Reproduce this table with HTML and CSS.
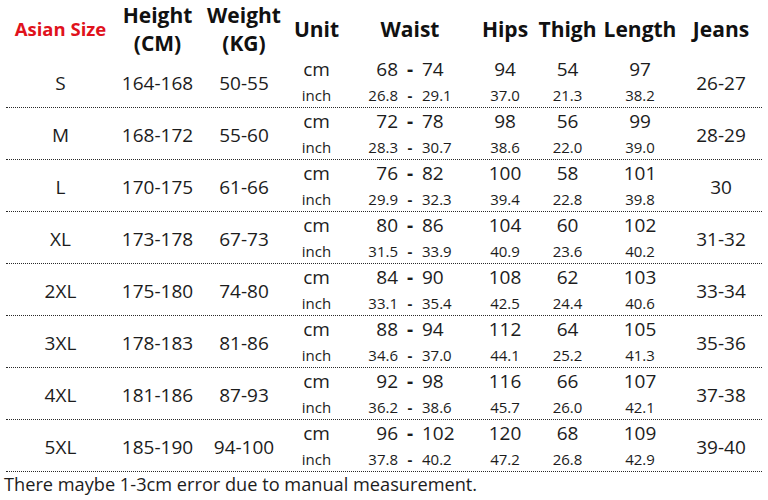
FILE: index.html
```html
<!DOCTYPE html>
<html>
<head>
<meta charset="utf-8">
<link rel="stylesheet" href="styles.css">
</head>
<body>
<div class="chart">
  <div class="row head">
    <div class="c red">Asian Size</div>
    <div class="c">Height<br>(CM)</div>
    <div class="c">Weight<br>(KG)</div>
    <div class="c">Unit</div>
    <div class="c">Waist</div>
    <div class="c">Hips</div>
    <div class="c">Thigh</div>
    <div class="c">Length</div>
    <div class="c">Jeans</div>
  </div>

  <div class="row">
    <div class="c big">S</div><div class="c big">164-168</div><div class="c big">50-55</div>
    <div class="c dual"><span class="u">cm</span><span class="s">inch</span></div>
    <div class="c dual"><span class="rng u"><i>68</i><b>-</b><em>74</em></span><span class="rng s"><i>26.8</i><b>-</b><em>29.1</em></span></div>
    <div class="c dual"><span class="u">94</span><span class="s">37.0</span></div>
    <div class="c dual"><span class="u">54</span><span class="s">21.3</span></div>
    <div class="c dual"><span class="u">97</span><span class="s">38.2</span></div>
    <div class="c big">26-27</div>
  </div>

  <div class="row">
    <div class="c big">M</div><div class="c big">168-172</div><div class="c big">55-60</div>
    <div class="c dual"><span class="u">cm</span><span class="s">inch</span></div>
    <div class="c dual"><span class="rng u"><i>72</i><b>-</b><em>78</em></span><span class="rng s"><i>28.3</i><b>-</b><em>30.7</em></span></div>
    <div class="c dual"><span class="u">98</span><span class="s">38.6</span></div>
    <div class="c dual"><span class="u">56</span><span class="s">22.0</span></div>
    <div class="c dual"><span class="u">99</span><span class="s">39.0</span></div>
    <div class="c big">28-29</div>
  </div>

  <div class="row">
    <div class="c big">L</div><div class="c big">170-175</div><div class="c big">61-66</div>
    <div class="c dual"><span class="u">cm</span><span class="s">inch</span></div>
    <div class="c dual"><span class="rng u"><i>76</i><b>-</b><em>82</em></span><span class="rng s"><i>29.9</i><b>-</b><em>32.3</em></span></div>
    <div class="c dual"><span class="u">100</span><span class="s">39.4</span></div>
    <div class="c dual"><span class="u">58</span><span class="s">22.8</span></div>
    <div class="c dual"><span class="u">101</span><span class="s">39.8</span></div>
    <div class="c big">30</div>
  </div>

  <div class="row">
    <div class="c big">XL</div><div class="c big">173-178</div><div class="c big">67-73</div>
    <div class="c dual"><span class="u">cm</span><span class="s">inch</span></div>
    <div class="c dual"><span class="rng u"><i>80</i><b>-</b><em>86</em></span><span class="rng s"><i>31.5</i><b>-</b><em>33.9</em></span></div>
    <div class="c dual"><span class="u">104</span><span class="s">40.9</span></div>
    <div class="c dual"><span class="u">60</span><span class="s">23.6</span></div>
    <div class="c dual"><span class="u">102</span><span class="s">40.2</span></div>
    <div class="c big">31-32</div>
  </div>

  <div class="row">
    <div class="c big">2XL</div><div class="c big">175-180</div><div class="c big">74-80</div>
    <div class="c dual"><span class="u">cm</span><span class="s">inch</span></div>
    <div class="c dual"><span class="rng u"><i>84</i><b>-</b><em>90</em></span><span class="rng s"><i>33.1</i><b>-</b><em>35.4</em></span></div>
    <div class="c dual"><span class="u">108</span><span class="s">42.5</span></div>
    <div class="c dual"><span class="u">62</span><span class="s">24.4</span></div>
    <div class="c dual"><span class="u">103</span><span class="s">40.6</span></div>
    <div class="c big">33-34</div>
  </div>

  <div class="row">
    <div class="c big">3XL</div><div class="c big">178-183</div><div class="c big">81-86</div>
    <div class="c dual"><span class="u">cm</span><span class="s">inch</span></div>
    <div class="c dual"><span class="rng u"><i>88</i><b>-</b><em>94</em></span><span class="rng s"><i>34.6</i><b>-</b><em>37.0</em></span></div>
    <div class="c dual"><span class="u">112</span><span class="s">44.1</span></div>
    <div class="c dual"><span class="u">64</span><span class="s">25.2</span></div>
    <div class="c dual"><span class="u">105</span><span class="s">41.3</span></div>
    <div class="c big">35-36</div>
  </div>

  <div class="row">
    <div class="c big">4XL</div><div class="c big">181-186</div><div class="c big">87-93</div>
    <div class="c dual"><span class="u">cm</span><span class="s">inch</span></div>
    <div class="c dual"><span class="rng u"><i>92</i><b>-</b><em>98</em></span><span class="rng s"><i>36.2</i><b>-</b><em>38.6</em></span></div>
    <div class="c dual"><span class="u">116</span><span class="s">45.7</span></div>
    <div class="c dual"><span class="u">66</span><span class="s">26.0</span></div>
    <div class="c dual"><span class="u">107</span><span class="s">42.1</span></div>
    <div class="c big">37-38</div>
  </div>

  <div class="row">
    <div class="c big">5XL</div><div class="c big">185-190</div><div class="c big">94-100</div>
    <div class="c dual"><span class="u">cm</span><span class="s">inch</span></div>
    <div class="c dual"><span class="rng u"><i>96</i><b>-</b><em>102</em></span><span class="rng s"><i>37.8</i><b>-</b><em>40.2</em></span></div>
    <div class="c dual"><span class="u">120</span><span class="s">47.2</span></div>
    <div class="c dual"><span class="u">68</span><span class="s">26.8</span></div>
    <div class="c dual"><span class="u">109</span><span class="s">42.9</span></div>
    <div class="c big">39-40</div>
  </div>

  <p class="note">There maybe 1-3cm error due to manual measurement.</p>
</div>
</body>
</html>
```

FILE: styles.css
```css
* { box-sizing: border-box; }
html, body { margin: 0; padding: 0; background: #fff; }
body {
  width: 768px;
  height: 500px;
  overflow: hidden;
  font-family: "Open Sans", "Liberation Sans", sans-serif;
  color: #1c1c1c;
}
.chart { padding-left: 6px; }
.row {
  display: grid;
  grid-template-columns: 109px 85px 88px 57px 130px 60px 65px 80px 82px;
  width: 756px;
  height: 52px;
  border-bottom: 1px dotted #2a2a2a;
}
.row.head {
  height: 56px;
  border-bottom: none;
  padding-top: 1px;
}
.c {
  display: flex;
  flex-direction: column;
  justify-content: center;
  align-items: center;
  text-align: center;
}
.head .c {
  font-weight: 700;
  font-size: 21px;
  line-height: 28px;
  color: #111;
}
.head .c.red {
  color: #e0121c;
  font-size: 18.5px;
}
.big {
  font-size: 19px;
  line-height: 26px;
  padding-top: 1px;
}
.dual {
  justify-content: flex-start;
}
.dual > span {
  display: block;
  height: 26px;
  line-height: 26px;
}
.dual .u { font-size: 19px; }
.dual .s { font-size: 15px; line-height: 27px; }
.rng {
  display: grid !important;
  grid-template-columns: 53px 24px 53px;
  width: 130px;
}
.rng i { font-style: normal; text-align: right; }
.rng b { font-weight: 700; text-align: center; }
.rng em { font-style: normal; text-align: left; }
.note {
  margin: 0;
  margin-left: -2px;
  font-size: 18.2px;
  line-height: 24px;
  color: #1c1c1c;
}
```
